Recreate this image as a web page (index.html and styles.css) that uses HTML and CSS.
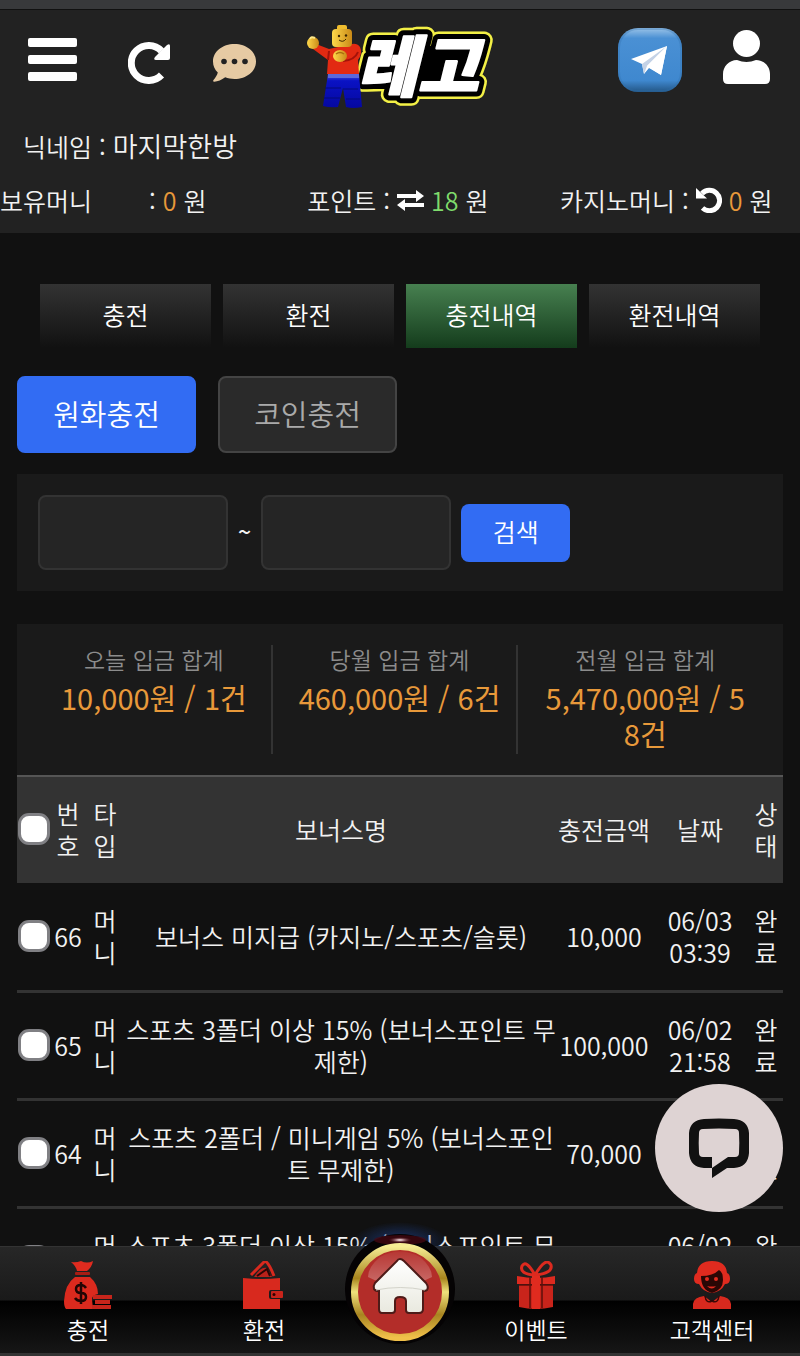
FILE: index.html
```html
<!DOCTYPE html>
<html lang="ko">
<head>
    <meta charset="UTF-8">
    <meta name="viewport" content="width=device-width, initial-scale=1.0">
    <title>충전내역</title>
    <link rel="stylesheet" href="styles.css">
</head>
<body>

    <header class="header">
        <div class="header-top">
            <div class="header-left">
                <button type="button" class="icon-btn" aria-label="메뉴">
                    <svg width="49" height="44" viewBox="0 0 49 44" fill="#fff">
                        <rect y="0" width="49" height="9" rx="2"/>
                        <rect y="17" width="49" height="9" rx="2"/>
                        <rect y="34" width="49" height="9" rx="2"/>
                    </svg>
                </button>
                <button type="button" class="icon-btn btn-refresh" aria-label="새로고침">
                    <svg width="42" height="48" viewBox="0 -6 42 48">
                        <path d="M33.500 33A17.500 17.500 0 1 1 33.500 9" fill="none" stroke="#fff" stroke-width="7"/>
                        <path d="M39 3q3-2 3 1v12q0 2-2 2H28q-3 0-1-3z" fill="#fff"/>
                    </svg>
                </button>
                <button type="button" class="icon-btn" aria-label="쪽지">
                    <svg width="43" height="44" viewBox="0 -6 43 44">
                        <path d="M21.500 0C33.500 0 43 7.600 43 17.400S33.500 35 21.500 35c-3.500 0-6.500-.6-9.300-1.700C8.500 36 4.500 37.800 1 37.700c-1-.1-1-1-.5-1.700 2-2.300 3.700-5 4.300-7.500C1.700 25.500 0 21.700 0 17.400 0 7.600 9.500 0 21.500 0z" fill="#e6caa3"/>
                        <g fill="#222"><circle cx="11" cy="17.500" r="2.800"/><circle cx="21.500" cy="17.500" r="2.800"/><circle cx="32" cy="17.500" r="2.800"/></g>
                    </svg>
                </button>
            </div>

            <a href="#" class="logo" aria-label="레고">
                <svg width="185" height="84" viewBox="0 -6 185 84">
                    <defs>
                        <linearGradient id="skin" x1="0" x2="1"><stop offset="0" stop-color="#ffd84a"/><stop offset="1" stop-color="#c98a17"/></linearGradient>
                        <linearGradient id="pants" x1="0" y1="0" x2="0" y2="1"><stop offset="0" stop-color="#4a5ae0"/><stop offset=".2" stop-color="#0a12c4"/><stop offset="1" stop-color="#0508a0"/></linearGradient>
                    </defs>
                    <g class="logo-text">
                        <text x="50" y="67" class="logo-yellow">레고</text>
                        <text x="50" y="67" class="logo-black">레고</text>
                        <path d="M76 22h86l-8 43H66z"/>
                        <text x="50" y="67" class="logo-white">레고</text>
                    </g>
                    <!-- 캐릭터 -->
                    <path d="M21 50h31l3 33q-9 2-16 0l-3-19-5 19q-8 1-15-1z" fill="url(#pants)"/>
                    <path d="M18 64h16M36 65h15M17 74h16M39 75h14" stroke="#050a78" stroke-width="1"/>
                    <path d="M21 50h31v4H21z" fill="#5a68dc"/>
                    <path d="M22 25L9 20l-3 5 15 11-1 14h32l-1-14q5-7 2-13-3-4-8-3z" fill="#e22a12"/>
                    <path d="M51 28q-3 8-15 9M22 27l-1 9" stroke="#a3120a" stroke-width="2" fill="none"/>
                    <ellipse cx="6" cy="19" rx="6" ry="6" fill="url(#skin)"/>
                    <path d="M3 15q1-3 5-1" stroke="#ffe98a" stroke-width="2" fill="none"/>
                    <ellipse cx="33" cy="32" rx="7" ry="6" fill="url(#skin)"/>
                    <path d="M29 30q4-3 8 0" stroke="#a8700d" stroke-width="1.500" fill="none"/>
                    <rect x="30" y="1" width="10" height="7" rx="2" fill="#f0bd2e"/>
                    <rect x="25" y="5" width="20" height="18" rx="4" fill="url(#skin)"/>
                    <g fill="#3a2500"><circle cx="32" cy="12" r="1.200"/><circle cx="39" cy="11.500" r="1.200"/></g>
                    <path d="M32 16q4 3 7-1" stroke="#3a2500" fill="none"/>
                </svg>
            </a>

            <div class="header-right">
                <a href="#" class="icon-btn" aria-label="텔레그램">
                    <svg width="64" height="64" viewBox="0 0 64 64">
                        <defs>
                            <linearGradient id="tg" x1="0" y1="0" x2="0" y2="1"><stop offset="0" stop-color="#9cc4e8"/><stop offset=".16" stop-color="#4a90d4"/><stop offset=".82" stop-color="#3f88cf"/><stop offset="1" stop-color="#235685"/></linearGradient>
                        </defs>
                        <rect width="64" height="64" rx="20" fill="url(#tg)"/>
                        <rect x="1" y="1" width="62" height="62" rx="19" fill="none" stroke="#2d6ca8" stroke-width="2" opacity=".3"/>
                        <path d="M13 31L49 18 43 47 31 40 26 46 24 36z" fill="#fff"/>
                        <path d="M24 36L49 18 29 38 26 46z" fill="#c4d2e6"/>
                        <path d="M29 38L49 18 43 47z" fill="#fff"/>
                    </svg>
                </a>
                <a href="#" class="icon-btn" aria-label="내 정보">
                    <svg width="47" height="60" viewBox="0 0 47 60" fill="#fff">
                        <circle cx="23.500" cy="13.500" r="13.500"/>
                        <path d="M14 30q9.500 4 19 0c8 0 14 6.500 14 14v5q0 5-5 5H5q-5 0-5-5v-5c0-7.500 6-14 14-14z"/>
                    </svg>
                </a>
            </div>
        </div>

        <p class="nickname">닉네임 : <span class="nick">마지막한방</span></p>

        <div class="money">
            <p class="money-item"><span class="money-label">보유머니</span>: <span class="orange">0</span> 원</p>
            <p class="money-item">포인트 :
                <svg width="27" height="21" viewBox="0 0 27 21" fill="#fff">
                    <path d="M0 4h19V0l8 6-8 6V8H0zM27 13H8V9l-8 6 8 6v-4h19z"/>
                </svg>
                <span class="green">18</span> 원</p>
            <p class="money-item">카지노머니 :
                <svg width="26" height="26" viewBox="0 0 26 26">
                    <path d="M6 6.500A10.200 10.200 0 1 1 6.500 21" fill="none" stroke="#fff" stroke-width="5"/>
                    <path d="M0 1v10.500h11z" fill="#fff"/>
                </svg>
                <span class="orange">0</span> 원</p>
        </div>
    </header>

    <main class="content">
        <nav class="tabs">
            <a href="#">충전</a>
            <a href="#">환전</a>
            <a href="#" class="active">충전내역</a>
            <a href="#">환전내역</a>
        </nav>

        <div class="type-tabs">
            <button type="button" class="btn-type active">원화충전</button>
            <button type="button" class="btn-type">코인충전</button>
        </div>

        <form class="search">
            <input type="text" name="startDate" aria-label="시작일">
            <span>~</span>
            <input type="text" name="endDate" aria-label="종료일">
            <button type="button" class="btn-search">검색</button>
        </form>

        <dl class="summary">
            <div>
                <dt>오늘 입금 합계</dt>
                <dd>10,000원 / 1건</dd>
            </div>
            <div>
                <dt>당월 입금 합계</dt>
                <dd>460,000원 / 6건</dd>
            </div>
            <div>
                <dt>전월 입금 합계</dt>
                <dd>5,470,000원 / 58건</dd>
            </div>
        </dl>

        <table class="list">
            <colgroup>
                <col class="col-check">
                <col class="col-no">
                <col class="col-type">
                <col>
                <col class="col-amount">
                <col class="col-date">
                <col class="col-state">
            </colgroup>
            <thead>
                <tr>
                    <th><input type="checkbox" aria-label="전체 선택"></th>
                    <th>번호</th>
                    <th>타입</th>
                    <th>보너스명</th>
                    <th>충전금액</th>
                    <th>날짜</th>
                    <th>상태</th>
                </tr>
            </thead>
            <tbody>
                <tr>
                    <td><input type="checkbox" aria-label="66 선택"></td>
                    <td>66</td>
                    <td>머니</td>
                    <td>보너스 미지급 (카지노/스포츠/슬롯)</td>
                    <td>10,000</td>
                    <td>06/03 03:39</td>
                    <td>완료</td>
                </tr>
                <tr>
                    <td><input type="checkbox" aria-label="65 선택"></td>
                    <td>65</td>
                    <td>머니</td>
                    <td>스포츠 3폴더 이상 15% (보너스포인트 무제한)</td>
                    <td>100,000</td>
                    <td>06/02 21:58</td>
                    <td>완료</td>
                </tr>
                <tr>
                    <td><input type="checkbox" aria-label="64 선택"></td>
                    <td>64</td>
                    <td>머니</td>
                    <td>스포츠 2폴더 / 미니게임 5% (보너스포인트 무제한)</td>
                    <td>70,000</td>
                    <td>06/02 20:40</td>
                    <td>완료</td>
                </tr>
                <tr>
                    <td><input type="checkbox" aria-label="63 선택"></td>
                    <td>63</td>
                    <td>머니</td>
                    <td>스포츠 3폴더 이상 15% (보너스포인트 무제한)</td>
                    <td>50,000</td>
                    <td>06/02 19:12</td>
                    <td>완료</td>
                </tr>
            </tbody>
        </table>
    </main>

    <!-- 채팅 상담 -->
    <button type="button" class="btn-chat" aria-label="채팅 상담">
        <svg width="60" height="60" viewBox="0 0 60 60">
            <path d="M15 1q15-1 30 0 14 1 15 14 .6 10 0 20-1 14-15 15h-7L23 60V50h-8Q1 49 0 35q-.6-10 0-20Q1 2 15 1z" fill="#111"/>
            <path d="M14 11q16-1 32 0 4 0 4 4 .6 10 0 20 0 4-4 4h-7L23 50V39h-9q-4 0-4-4-.6-10 0-20 0-4 4-4z" fill="#ded3d3"/>
        </svg>
    </button>

    <!-- 하단 메뉴 -->
    <nav class="bottom-nav">
        <a href="#">
            <svg width="48" height="48" viewBox="0 0 48 48">
                <path d="M7 1q5 1 10-1 6 3 12 0-1 6-6 10H13Q12 5 7 1z" fill="#e02b1f"/>
                <rect x="11" y="11" width="15" height="3" rx="1" fill="#a81c14"/>
                <path d="M11 16h15q8 7 8 17-6 1-6 5l1 10H2q-2-2-2-8 1-17 11-24z" fill="#db2a1e"/>
                <path d="M22 27q-2-3-5-3-5 0-5 4t5 4 5 4-5 4q-4 0-6-3M17 21v22" fill="none" stroke="#220504" stroke-width="2.500"/>
                <path d="M29 34h19v4H29zM31 39h15v4H31zM28 44h19v4H28z" fill="#c7251b"/>
            </svg>
            <span>충전</span>
        </a>
        <a href="#">
            <svg width="48" height="48" viewBox="0 0 48 48">
                <path d="M11 14L25 0q4 2 9 15" fill="none" stroke="#d8291e" stroke-width="3"/>
                <path d="M14 16q7-11 13-9l5 9z" fill="#b9211a"/>
                <path d="M17 15l10-7 3 7" fill="none" stroke="#2a0605" stroke-width="2"/>
                <path d="M3 17q18 2 37 0v12h-9q-2 0-2 2v5q0 2 2 2h9v10H3z" fill="#d8291e"/>
                <rect x="31" y="30" width="12" height="7" rx="1" fill="#c9241b"/>
                <circle cx="34" cy="33.500" r="1.500" fill="#300"/>
            </svg>
            <span>환전</span>
        </a>
        <div class="home-cell">
            <a href="#" class="home" aria-label="홈">
                <svg width="120" height="128" viewBox="0 0 120 128">
                    <defs>
                        <linearGradient id="gold" x1="0" y1="0" x2="0" y2="1"><stop offset="0" stop-color="#f6ec93"/><stop offset=".35" stop-color="#a8851d"/><stop offset=".5" stop-color="#efe27c"/><stop offset=".75" stop-color="#a88420"/><stop offset="1" stop-color="#f0c04a"/></linearGradient>
                        <linearGradient id="shine" x1="0" y1="0" x2="0" y2="1"><stop offset="0" stop-color="#fff" stop-opacity=".05"/><stop offset="1" stop-color="#fff" stop-opacity=".3"/></linearGradient>
                        <linearGradient id="house" x1="0" y1="0" x2="0" y2="1"><stop offset="0" stop-color="#fff"/><stop offset="1" stop-color="#e9e9df"/></linearGradient>
                        <radialGradient id="glow"><stop offset="0" stop-color="#1c3d84" stop-opacity=".8"/><stop offset="1" stop-color="#1c3d84" stop-opacity="0"/></radialGradient>
                        <radialGradient id="spark"><stop offset="0" stop-color="#fff"/><stop offset=".3" stop-color="#b58a92"/><stop offset="1" stop-color="#4a0812" stop-opacity="0"/></radialGradient>
                    </defs>
                    <ellipse cx="60" cy="20" rx="48" ry="20" fill="url(#glow)"/>
                    <circle cx="60" cy="67" r="55" fill="#050304"/>
                    <ellipse cx="60" cy="18" rx="26" ry="5" fill="#4a0812" opacity=".7"/>
                    <ellipse cx="60" cy="18" rx="12" ry="3" fill="url(#spark)"/>
                    <circle cx="60" cy="70" r="45.500" fill="#b32d29" stroke="url(#gold)" stroke-width="7"/>
                    <path d="M28 55q0-10 12-20 20-11 40 0 12 10 12 20-12 7-32 7T28 55z" fill="url(#shine)"/>
                    <path d="M60 37q2 0 4 2l22 22q3 4 1 7-1 1-4 1v18q0 4-4 4H69q-3 0-3-3V79q0-4-6-4-5 0-5 4v9q0 3-3 3H42q-3 0-3-4V69q-4 0-5-2-1-3 1-6l22-22q1-2 3-2z" fill="url(#house)" stroke="#4e1b18" stroke-width="2"/>
                    <path d="M36 68q24-5 49 0" fill="none" stroke="#d3d3ca"/>
                </svg>
            </a>
        </div>
        <a href="#">
            <svg width="48" height="48" viewBox="0 0 48 48">
                <g transform="translate(4)">
                    <path d="M19 14Q3 13 6 5q4-7 13 9Q30-5 35 4q2 8-15 10" fill="none" stroke="#dc2a1f" stroke-width="3"/>
                    <path d="M1 15q20 4 38 0v8H1z" fill="#dc2a1f"/>
                    <path d="M3 24h34v22q-17 4-34 0z" fill="#c9241b"/>
                    <path d="M14 16v31M26 16v31M3 24h34" stroke="#5e0f0b" stroke-width="1.500"/>
                    <path d="M16 15h8v33h-8z" fill="#e02b1f"/>
                </g>
            </svg>
            <span>이벤트</span>
        </a>
        <a href="#">
            <svg width="48" height="48" viewBox="0 0 48 48">
                <path d="M24 0q14 0 15 12 3 1 3 6t-5 5q-4 8-13 9-9-1-13-9-5 0-5-5t3-6Q10 0 24 0z" fill="#e02b1f"/>
                <path d="M13 15q12 0 18-6 4 2 4 10 0 10-11 13-11-3-11-17z" fill="#2a0705"/>
                <g fill="#e02b1f"><circle cx="19" cy="18" r="2"/><circle cx="28" cy="18" r="2"/><path d="M19 25q5 1 9 0-4 5-9 0z"/></g>
                <path d="M5 48v-5q1-7 11-8l8 6 8-6q10 1 11 8v5z" fill="#d8291e"/>
                <path d="M17 35q1 8 7 5 6 3 7-5" fill="none" stroke="#3a0806" stroke-width="1.500"/>
            </svg>
            <span>고객센터</span>
        </a>
    </nav>

</body>
</html>
```

FILE: styles.css
```css
* {
    box-sizing: border-box;
}
body {
    margin: 0;
    min-height: 100vh;
    background-color: #111;
    color: #f2f2f2;
    font-family: 'Noto Sans CJK KR', sans-serif;
    font-size: 25px;
    font-weight: 350;
    line-height: 32px;
}
p, dl, dd {
    margin: 0;
}
a {
    color: inherit;
    text-decoration: none;
}
button, input {
    margin: 0;
    font: inherit;
}
svg {
    display: block;
}

/* 상단 */
.header {
    height: 233px;
    background-color: #222;
    border-top: 9px solid #38393b;
    box-shadow: inset 0 1px 0 #111;
}
.header-top {
    display: grid;
    grid-template-columns: 1fr auto 1fr;
    align-items: center;
    height: 114px;
    padding: 0 30px 12px 28px;
}
.header-left {
    display: flex;
    align-items: center;
    gap: 43px;
}
.header-left .btn-refresh {
    margin-left: 8px;
}
.header-right {
    display: flex;
    align-items: center;
    justify-content: flex-end;
    gap: 41px;
}
.icon-btn {
    padding: 0;
    border: none;
    background: none;
    cursor: pointer;
}
.logo svg {
    overflow: visible;
}
.logo-text {
    font-size: 66px;
    font-weight: 900;
    font-style: italic;
    stroke-linejoin: round;
}
.logo-yellow {
    fill: #f3f046;
    stroke: #f3f046;
    stroke-width: 17px;
}
.logo-black {
    fill: #000;
    stroke: #000;
    stroke-width: 12px;
}
.logo-white {
    fill: #fff;
    stroke: #fff;
    stroke-width: 2px;
}
.nickname {
    padding: 7px 23px 0;
}
.nick {
    font-size: 27px;
}
.money {
    display: grid;
    grid-template-columns: 38.4% 31.6% 30%;
    padding-top: 22px;
}
.money-item {
    display: flex;
    align-items: center;
    gap: 7px;
    white-space: nowrap;
}
.money-label {
    width: 142px;
}
.orange {
    color: #e8993a;
}
.green {
    color: #7fdc6c;
}

/* 본문 */
.content {
    padding: 51px 17px 0;
}
.tabs {
    display: grid;
    grid-template-columns: repeat(4, 1fr);
    gap: 12px;
    padding: 0 23px;
}
.tabs a {
    height: 64px;
    background: linear-gradient(#333, #111);
    color: #fff;
    font-size: 25px;
    line-height: 60px;
    text-align: center;
}
.tabs .active {
    background: linear-gradient(#478050, #143c1c);
}
.type-tabs {
    display: flex;
    gap: 22px;
    margin: 28px 0 21px;
}
.btn-type {
    width: 179px;
    height: 77px;
    padding: 0 0 4px;
    border: 2px solid #444;
    border-radius: 8px;
    background-color: #2a2a2a;
    color: #aaa;
    font-size: 29px;
    cursor: pointer;
}
.btn-type.active {
    border-color: #326cf3;
    background-color: #326cf3;
    color: #fff;
}
.search {
    display: flex;
    align-items: center;
    gap: 10px;
    padding: 21px;
    background-color: #1a1a1a;
}
.search input {
    flex: 0 1 190px;
    min-width: 0;
    height: 75px;
    padding: 0 12px;
    border: 2px solid #333;
    border-radius: 8px;
    background-color: #252525;
    color: #fff;
}
.search span {
    padding-bottom: 4px;
    font-size: 23px;
    font-weight: 500;
}
.btn-search {
    width: 109px;
    height: 58px;
    padding: 0 0 4px;
    border: none;
    border-radius: 8px;
    background-color: #326cf3;
    color: #fff;
    cursor: pointer;
}

/* 입금 합계 */
.summary {
    display: flex;
    margin-top: 33px;
    padding: 21px 21px 21px 10px;
    background-color: #1a1a1a;
    text-align: center;
}
.summary div {
    flex: 1;
    min-height: 109px;
    padding: 0 10px 0 20px;
    border-right: 2px solid #333;
}
.summary div:last-child {
    border-right: none;
}
.summary dt {
    color: #8c8c8c;
    font-size: 23px;
    line-height: 28px;
}
.summary dd {
    margin-top: 6px;
    color: #e8993a;
    font-size: 29px;
    font-weight: 400;
    line-height: 36px;
    word-break: break-all;
}

/* 충전 목록 */
.list {
    width: 100%;
    table-layout: fixed;
    border-collapse: collapse;
    text-align: center;
}
.list tr {
    height: 108px;
    border-bottom: 3px solid #333;
}
.list thead tr {
    height: 107px;
    border-top: 2px solid #555;
    border-bottom: none;
    background-color: #333;
}
.list th, .list td {
    padding: 0;
    font-weight: 350;
    word-break: break-all;
}
.list th {
    padding-bottom: 2px;
}
.list td:nth-child(6) {
    word-break: normal;
}
.list input {
    display: block;
    width: 32px;
    height: 32px;
    margin: 0 auto;
    appearance: none;
    border: 3px solid #808084;
    border-radius: 11px;
    background-color: #fff;
}
.list input:checked {
    background-color: #326cf3;
}
.col-check {
    width: 34px;
}
.col-no {
    width: 34px;
}
.col-type {
    width: 40px;
}
.col-amount {
    width: 94px;
}
.col-date {
    width: 98px;
}
.col-state {
    width: 34px;
}

.btn-chat {
    position: fixed;
    right: 17px;
    bottom: 144px;
    display: flex;
    align-items: center;
    justify-content: center;
    width: 128px;
    height: 128px;
    padding: 0;
    border: none;
    border-radius: 50%;
    background-color: #ded3d3;
    cursor: pointer;
}

/* 하단 메뉴 */
.bottom-nav {
    position: fixed;
    left: 0;
    right: 0;
    bottom: 0;
    display: grid;
    grid-template-columns: 22% 22% 12% 22% 22%;
    height: 110px;
    border-top: 1px solid #333;
    border-bottom: 3px solid #333;
    background: linear-gradient(#272727, #1a1a1a 50%, #000 51%, #161616);
    color: #fff;
    font-size: 23px;
}
.bottom-nav a {
    display: flex;
    flex-direction: column;
    align-items: center;
    gap: 4px;
    padding-top: 14px;
}
.bottom-nav .home {
    position: absolute;
    left: 50%;
    bottom: 3px;
    margin-left: -60px;
    padding: 0;
}
```
